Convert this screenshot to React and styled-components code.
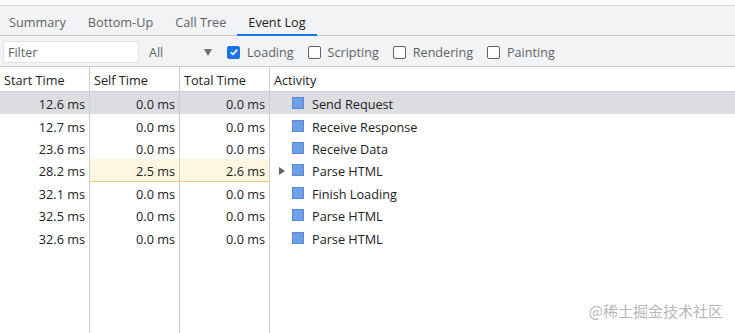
import React from "react";
import styled, { createGlobalStyle } from "styled-components";

const GlobalStyle = createGlobalStyle`
  html, body {
    margin: 0;
    padding: 0;
    background: #ffffff;
  }
  body {
    font-family: "Open Sans", "Noto Sans", "Noto Sans CJK SC", sans-serif;
    font-size: 12px;
    color: #202124;
  }
`;

const Page = styled.div`
  width: 735px;
  height: 333px;
  display: flex;
  flex-direction: column;
  padding-top: 5px;
  box-sizing: border-box;
  position: relative;
  overflow: hidden;
`;

const TabBar = styled.div`
  display: flex;
  height: 31px;
  background: #f1f3f4;
  border-top: 1px solid #d6d8db;
  border-bottom: 1px solid #cacdd1;
  padding-left: 0;
  margin-left: -2px;
  box-sizing: border-box;
`;

const Tab = styled.div`
  padding: 3px 11px 0;
  display: flex;
  align-items: center;
  color: ${({ active }) => (active ? "#202124" : "#5f6368")};
  border-bottom: 2px solid ${({ active }) => (active ? "#1a73e8" : "transparent")};
  margin-bottom: -1px;
  font-size: 12.7px;
`;

const Toolbar = styled.div`
  display: flex;
  align-items: center;
  height: 31px;
  background: #f1f3f4;
  border-bottom: 1px solid #cacdd1;
  padding: 1px 0 0 3px;
  box-sizing: border-box;
`;

const FilterInput = styled.div`
  width: 136px;
  height: 22px;
  background: #ffffff;
  border: 1px solid #e0e2e5;
  box-sizing: border-box;
  display: flex;
  align-items: center;
  padding: 2px 0 0 4px;
  color: #5f6368;
  font-size: 12.5px;
`;

const Select = styled.div`
  display: flex;
  align-items: center;
  width: 70px;
  margin-left: 10px;
  padding-top: 1px;
  color: #5f6368;
  font-size: 12.5px;
  justify-content: space-between;
`;

const Arrow = styled.span`
  width: 0;
  height: 0;
  border-left: 4px solid transparent;
  border-right: 4px solid transparent;
  border-top: 7px solid #6e6e6e;
  margin-right: 7px;
`;

const CheckLabel = styled.label`
  display: flex;
  align-items: center;
  margin-left: ${({ first }) => (first ? "8px" : "14px")};
  color: #5f6368;
  font-size: 12.6px;
  padding-top: 1px;
`;

const Box = styled.span`
  width: 13px;
  height: 13px;
  border-radius: 2px;
  box-sizing: border-box;
  border: 1px solid ${({ checked }) => (checked ? "#1a73e8" : "#5f6368")};
  background: ${({ checked }) => (checked ? "#1a73e8" : "#ffffff")};
  display: flex;
  align-items: center;
  justify-content: center;
  margin-right: 7px;
`;

const Table = styled.div`
  flex: 1;
  display: flex;
  flex-direction: column;
`;

const Row = styled.div`
  display: grid;
  grid-template-columns: 90px 90px 90px 1fr;
  height: ${({ header }) => (header ? "25px" : "22.4px")};
  background: ${({ selected }) => (selected ? "#dcdde0" : "transparent")};
  border-bottom: ${({ header }) => (header ? "1px solid #cacdd1" : "none")};
  box-sizing: border-box;
  flex: ${({ fill }) => (fill ? 1 : "none")};
`;

const Cell = styled.div`
  display: flex;
  align-items: center;
  justify-content: ${({ right }) => (right ? "flex-end" : "flex-start")};
  padding: 2px 4px 0;
  border-right: ${({ last }) => (last ? "none" : "1px solid #cacdd1")};
  background: ${({ hot }) => (hot ? "#fef6e1" : "transparent")};
  box-shadow: ${({ hot }) => (hot ? "inset 0 -1px 0 #f0cd6e" : "none")};
  white-space: nowrap;
  color: #202124;
  font-size: 12.7px;
`;

const Expander = styled.span`
  width: 0;
  height: 0;
  border-top: 4px solid transparent;
  border-bottom: 4px solid transparent;
  border-left: 6px solid #5f6368;
  margin-left: 5px;
  visibility: ${({ show }) => (show ? "visible" : "hidden")};
`;

const Swatch = styled.span`
  width: 12px;
  height: 12px;
  background: #6f9fe5;
  border: 1px solid #5b8ad6;
  box-sizing: border-box;
  margin: -2px 8px 0 7px;
`;

const Watermark = styled.div`
  position: absolute;
  right: 12px;
  bottom: 12px;
  color: #b5b7ba;
  font-size: 15px;
  font-family: "Noto Sans CJK SC", sans-serif;
`;

const rows = [
  { start: "12.6 ms", self: "0.0 ms", total: "0.0 ms", name: "Send Request", selected: true },
  { start: "12.7 ms", self: "0.0 ms", total: "0.0 ms", name: "Receive Response" },
  { start: "23.6 ms", self: "0.0 ms", total: "0.0 ms", name: "Receive Data" },
  { start: "28.2 ms", self: "2.5 ms", total: "2.6 ms", name: "Parse HTML", hot: true, expand: true },
  { start: "32.1 ms", self: "0.0 ms", total: "0.0 ms", name: "Finish Loading" },
  { start: "32.5 ms", self: "0.0 ms", total: "0.0 ms", name: "Parse HTML" },
  { start: "32.6 ms", self: "0.0 ms", total: "0.0 ms", name: "Parse HTML" },
];

const Check = () => (
  <svg width="10" height="10" viewBox="0 0 10 10">
    <path d="M1.8 5.2 L4 7.4 L8.3 2.6" fill="none" stroke="#fff" strokeWidth="1.6" />
  </svg>
);

const App = () => (
  <Page>
    <GlobalStyle />
    <TabBar>
      <Tab>Summary</Tab>
      <Tab>Bottom-Up</Tab>
      <Tab>Call Tree</Tab>
      <Tab active>Event Log</Tab>
    </TabBar>
    <Toolbar>
      <FilterInput>Filter</FilterInput>
      <Select>
        All
        <Arrow />
      </Select>
      <CheckLabel first>
        <Box checked>
          <Check />
        </Box>
        Loading
      </CheckLabel>
      <CheckLabel>
        <Box />
        Scripting
      </CheckLabel>
      <CheckLabel>
        <Box />
        Rendering
      </CheckLabel>
      <CheckLabel>
        <Box />
        Painting
      </CheckLabel>
    </Toolbar>
    <Table>
      <Row header>
        <Cell>Start Time</Cell>
        <Cell>Self Time</Cell>
        <Cell>Total Time</Cell>
        <Cell last>Activity</Cell>
      </Row>
      {rows.map((r, i) => (
        <Row key={i} selected={r.selected}>
          <Cell right>{r.start}</Cell>
          <Cell right hot={r.hot}>{r.self}</Cell>
          <Cell right hot={r.hot}>{r.total}</Cell>
          <Cell last>
            <Expander show={r.expand} />
            <Swatch />
            {r.name}
          </Cell>
        </Row>
      ))}
      <Row fill>
        <Cell />
        <Cell />
        <Cell />
        <Cell last />
      </Row>
    </Table>
    <Watermark>@稀土掘金技术社区</Watermark>
  </Page>
);

export default App;
